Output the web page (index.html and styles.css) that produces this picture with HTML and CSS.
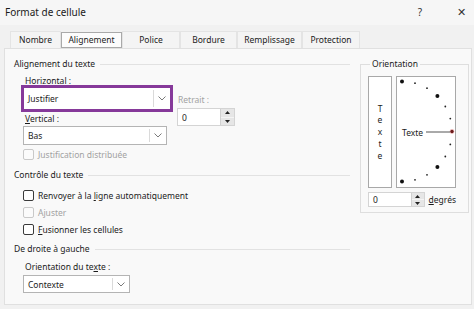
FILE: index.html
```html
<!DOCTYPE html>
<html lang="fr">
<head>
<meta charset="utf-8">
<title>Format de cellule</title>
<link rel="stylesheet" href="styles.css">
</head>
<body>
<div class="dialog">
  <div class="titlebar">
    <span class="title">Format de cellule</span>
    <span class="tb-btns"><span class="help">?</span><span class="close">✕</span></span>
  </div>
  <div class="tabs">
    <div class="tab t1">Nombre</div>
    <div class="tab t2 sel">Alignement</div>
    <div class="tab t3">Police</div>
    <div class="tab t4">Bordure</div>
    <div class="tab t5">Remplissage</div>
    <div class="tab t6">Protection</div>
  </div>
  <div class="panel">
    <div class="left">
      <div class="sec-head">Alignement du texte</div>
      <div class="align-grid">
        <div class="lbl lbl-h"><u>H</u>orizontal :</div>
        <div class="hl">
          <div class="select sel-just"><span class="val">Justifier</span><span class="dd"><svg width="8" height="5" viewBox="0 0 8 5"><path d="M0.5 0.5 L4 4 L7.5 0.5" fill="none" stroke="#7a7a7a" stroke-width="1"/></svg></span></div>
        </div>
        <div class="retrait">
          <div class="lbl dis">Retrait :</div>
          <div class="spin"><span class="spin-val">0</span><span class="spin-btns"><span class="sb"><svg width="5" height="3" viewBox="0 0 5 3"><path d="M0 3 L2.5 0 L5 3Z" fill="#222"/></svg></span><span class="sb"><svg width="5" height="3" viewBox="0 0 5 3"><path d="M0 0 L2.5 3 L5 0Z" fill="#222"/></svg></span></span></div>
        </div>
        <div class="lbl lbl-v"><u>V</u>ertical :</div>
        <div class="select sel-bas"><span class="val">Bas</span><span class="dd"><svg width="8" height="5" viewBox="0 0 8 5"><path d="M0.5 0.5 L4 4 L7.5 0.5" fill="none" stroke="#7a7a7a" stroke-width="1"/></svg></span></div>
        <div class="cb-row dis first"><span class="cb"></span><span>Justification distribuée</span></div>
      </div>

      <div class="sec-head h2">Contrôle du texte</div>
      <div class="checks">
        <div class="cb-row tall"><span class="cb on"></span><span>Renvoyer à la <u>l</u>igne automatiquement</span></div>
        <div class="cb-row tall dis"><span class="cb"></span><span>Ajuster</span></div>
        <div class="cb-row tall"><span class="cb on"></span><span><u>F</u>usionner les cellules</span></div>
      </div>

      <div class="sec-head h3">De droite à gauche</div>
      <div class="rtl">
        <div class="lbl lbl-o">Orientation du te<u>x</u>te :</div>
        <div class="select sel-ctx"><span class="val">Contexte</span><span class="dd"><svg width="8" height="5" viewBox="0 0 8 5"><path d="M0.5 0.5 L4 4 L7.5 0.5" fill="none" stroke="#7a7a7a" stroke-width="1"/></svg></span></div>
      </div>
    </div>

    <fieldset class="orient">
      <legend>Orientation</legend>
      <div class="orient-boxes">
        <div class="vtext"><span>T</span><span>e</span><span>x</span><span>t</span><span>e</span></div>
        <div class="dial">
          <svg width="58" height="110" viewBox="0 0 58 110">
            <circle cx="5" cy="4.5" r="2" fill="#111"/>
            <circle cx="18" cy="6.2" r="0.9" fill="#222"/>
            <circle cx="30" cy="11.2" r="0.9" fill="#222"/>
            <circle cx="40.4" cy="19.1" r="2" fill="#111"/>
            <circle cx="48.3" cy="29.5" r="0.9" fill="#222"/>
            <circle cx="53.3" cy="41.6" r="0.9" fill="#222"/>
            <circle cx="55" cy="54.5" r="2.4" fill="#f3c4c4"/>
            <circle cx="55" cy="54.5" r="1.7" fill="#6b1a1a"/>
            <circle cx="53.3" cy="67.4" r="0.9" fill="#222"/>
            <circle cx="48.3" cy="79.5" r="0.9" fill="#222"/>
            <circle cx="40.4" cy="89.9" r="2" fill="#111"/>
            <circle cx="30" cy="97.8" r="0.9" fill="#222"/>
            <circle cx="18" cy="102.8" r="0.9" fill="#222"/>
            <circle cx="5" cy="104.5" r="2" fill="#111"/>
            <line x1="29" y1="55" x2="53" y2="55" stroke="#555" stroke-width="1"/>
            <text x="5" y="58.5" class="dial-text">Texte</text>
          </svg>
        </div>
      </div>
      <div class="deg-row">
        <div class="spin spin-deg"><span class="spin-val">0</span><span class="spin-btns"><span class="sb"><svg width="5" height="3" viewBox="0 0 5 3"><path d="M0 3 L2.5 0 L5 3Z" fill="#222"/></svg></span><span class="sb"><svg width="5" height="3" viewBox="0 0 5 3"><path d="M0 0 L2.5 3 L5 0Z" fill="#222"/></svg></span></span></div>
        <span class="deg-lbl"><u>d</u>egrés</span>
      </div>
    </fieldset>
  </div>
</div>
</body>
</html>
```

FILE: styles.css
```css
* { box-sizing: border-box; }
html, body { margin: 0; padding: 0; }
body {
  width: 474px;
  height: 309px;
  overflow: hidden;
  background: #f1f1f1;
  font-family: "Noto Sans", "Open Sans", sans-serif;
  font-size: 8.5px;
  color: #1b1b1b;
}
u { text-decoration: underline; text-underline-offset: 1px; }

.dialog { width: 474px; height: 309px; display: flex; flex-direction: column; }

.titlebar {
  height: 25px;
  background: #f6f6f6;
  display: flex;
  align-items: center;
  justify-content: space-between;
  padding: 0 0 2px 5px;
}
.title { font-size: 10px; color: #1a1a1a; }
.tb-btns { display: flex; align-items: center; }
.help { font-size: 10px; color: #333; width: 10px; text-align: center; margin-right: 30px; }
.close { font-size: 11px; color: #333; width: 12px; text-align: center; margin-right: 7px; }

.tabs {
  height: 23px;
  display: flex;
  align-items: flex-end;
  padding-left: 10px;
}
.tab {
  height: 17px;
  line-height: 16px;
  text-align: center;
  border: 1px solid #e4e4e4;
  border-bottom: none;
  background: #f4f4f4;
  color: #222;
}
.t1 { width: 51px; }
.t2 { width: 61px; }
.t3 { width: 58px; }
.t4 { width: 57px; }
.t5 { width: 65px; }
.t6 { width: 58px; }
.tab.sel {
  height: 16px;
  line-height: 14px;
  background: #fcfcfc;
  border: 1px solid #a9a9a9;
}

.panel {
  margin-left: 4px;
  width: 468px;
  height: 257px;
  border: 1px solid #e0e0e0;
  background: #f9f9f9;
  display: flex;
  padding-left: 9px;
}

.left { width: 336px; padding-top: 9px; }

.sec-head {
  display: flex;
  align-items: center;
  height: 12px;
  line-height: 12px;
  white-space: nowrap;
}
.sec-head::after {
  content: "";
  flex: 1;
  margin-left: 5px;
  border-top: 1px solid #e2e2e2;
}
.sec-head.h2 { margin-top: 8px; }
.sec-head.h3 { margin-top: 5px; }

.lbl { padding-left: 2px; white-space: nowrap; }
.dis { color: #a2a2a2; }

.align-grid {
  margin-top: 6px;
  margin-left: 9px;
  display: grid;
  grid-template-columns: 154px auto;
  grid-template-rows: 9px 27px 13px 20px 16px;
}
.lbl-h { grid-column: 1; grid-row: 1; line-height: 9px; }
.hl {
  grid-column: 1; grid-row: 2;
  margin-left: -2px;
  width: 152px;
  height: 27px;
  border: 3px solid #86399a;
}
.retrait { grid-column: 2; grid-row: 2 / 4; padding-top: 9px; }
.retrait .lbl { padding-left: 1px; line-height: 12px; }
.lbl-v { grid-column: 1; grid-row: 3; line-height: 13px; }
.sel-bas { grid-column: 1; grid-row: 4; width: 144px; height: 19px; margin-top: 1px; }
.cb-row.first { grid-column: 1 / 3; grid-row: 5; margin-top: 3px; }

.select {
  display: flex;
  align-items: stretch;
  background: #fff;
  border: 1px solid #b4b4b4;
}
.sel-just { border: none; height: 21px; width: 146px; }
.select .val { flex: 1; padding-left: 4px; display: flex; align-items: center; }
.select .dd {
  width: 17px;
  border-left: 1px solid #dadada;
  display: flex;
  align-items: center;
  justify-content: center;
  margin: 2px 0;
}

.spin {
  margin-top: 2px;
  width: 58px;
  height: 18px;
  display: flex;
  border: 1px solid #d4d4d4;
  background: #fff;
}
.spin-val { flex: 1; padding-left: 4px; display: flex; align-items: center; }
.spin-btns { width: 14px; display: flex; flex-direction: column; background: #e6e6e6; border-left: 1px solid #d0d0d0; }
.sb { flex: 1; display: flex; align-items: center; justify-content: center; }
.sb + .sb { border-top: 1px solid #f4f4f4; }

.cb-row { display: flex; align-items: center; height: 13px; white-space: nowrap; }
.cb {
  width: 11px;
  height: 11px;
  border: 1px solid #c9c9c9;
  border-radius: 2px;
  background: #fbfbfb;
  margin-right: 4px;
  flex: none;
}
.cb.on { border-color: #3a3a3a; background: #fff; }

.checks { margin-top: 6px; margin-left: 9px; }
.cb-row.tall { height: 17px; }

.rtl { margin-top: 6px; margin-left: 9px; }
.lbl-o { line-height: 12px; }
.sel-ctx { margin-top: 2px; width: 107px; height: 18px; }

.orient {
  margin: 9px 0 0 10px;
  padding: 0 12px 6px 7px;
  width: 109px;
  height: 155px;
  border: 1px solid #dedede;
  min-width: 0;
}
.orient legend {
  padding: 0 2px;
  margin-left: 2px;
  line-height: 12px;
  height: 12px;
}
.orient-boxes { display: flex; gap: 4px; margin-top: 6px; }
.vtext {
  width: 24px;
  height: 112px;
  border: 1px solid #a8a8a8;
  background: #fff;
  display: flex;
  flex-direction: column;
  align-items: center;
  justify-content: center;
  line-height: 11.7px;
  font-size: 8.5px;
}
.dial {
  width: 60px;
  height: 112px;
  border: 1px solid #a8a8a8;
  background: #fff;
}
.dial svg { display: block; }
.dial-text { font-family: "Noto Sans", sans-serif; font-size: 8.5px; fill: #1b1b1b; }

.deg-row { display: flex; align-items: center; margin-top: 4px; }
.spin-deg { margin-top: 0; width: 57px; height: 15px; }
.spin-deg .spin-btns { width: 13px; }
.deg-lbl { margin-left: 4px; }
```
